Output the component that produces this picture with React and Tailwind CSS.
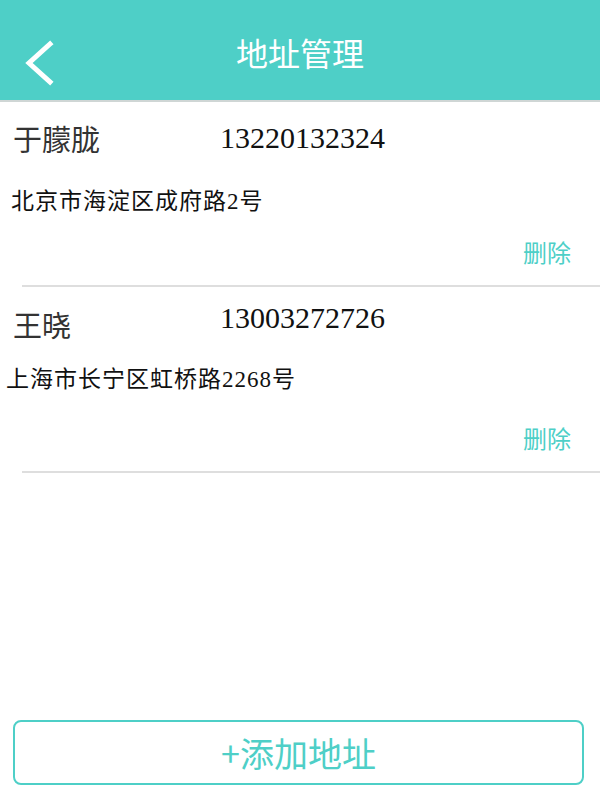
import React from "react";

const sans = { fontFamily: '"Noto Sans CJK SC", "Noto Sans", sans-serif' };

function Item({ name, phone, address, first }) {
  return (
    <div className={first ? "pt-[12px]" : "pt-[10px]"}>
      <div className="flex h-[48px] items-center">
        <div
          className={`w-[220px] pl-[13px] text-[29px] leading-none text-[#333] font-['Noto_Sans_CJK_SC',sans-serif] ${first ? "" : "pt-[6px]"}`}
        >
          {name}
        </div>
        <div
          className={`text-[30px] leading-none text-[#111] font-['Liberation_Serif','Noto_Sans_CJK_SC',serif] ${first ? "" : "pb-[6px]"}`}
        >
          {phone}
        </div>
      </div>
      <div
        className={`flex h-[34px] items-center text-[23px] tracking-[1px] leading-none text-[#111] font-['Liberation_Serif','Noto_Sans_CJK_SC',serif] ${first ? "mt-[22px] pl-[11px]" : "mt-[17px] pl-[6px]"}`}
      >
        {address}
      </div>
      <div
        className={`flex h-[30px] items-center justify-end pr-[29px] text-[24px] leading-none text-[#4ecfc7] font-['Noto_Sans_CJK_SC',sans-serif] ${first ? "mt-[19px]" : "mt-[27px]"}`}
      >
        删除
      </div>
      <div className="mt-[18px] ml-[22px] h-[2px] bg-[#dedede]" />
    </div>
  );
}

export default function App() {
  return (
    <div className="flex h-[800px] w-[600px] flex-col bg-white" style={sans}>
      <div className="relative flex h-[100px] items-center justify-center bg-[#4ecfc7]">
        <svg
          className="absolute left-[22px] top-[40px]"
          width="36"
          height="46"
          viewBox="0 0 36 46"
        >
          <polyline
            points="28,4 7,23 28,42"
            fill="none"
            stroke="white"
            strokeWidth="5"
            strokeLinecap="square"
          />
        </svg>
        <div className="pt-[4px] text-[32px] leading-none text-white font-['Noto_Sans_CJK_SC',sans-serif]">
          地址管理
        </div>
      </div>
      <div className="h-[2px] bg-[#cfd6d5]" />
      <Item first name="于朦胧" phone="13220132324" address="北京市海淀区成府路2号" />
      <Item name="王晓" phone="13003272726" address="上海市长宁区虹桥路2268号" />
      <div className="flex-1" />
      <div className="mb-[15px] ml-[13px] mr-[16px] flex h-[65px] items-center justify-center rounded-[8px] border-2 border-[#4ecfc7] text-[34px] leading-none text-[#4ecfc7] font-['Noto_Sans_CJK_SC',sans-serif]">
        +添加地址
      </div>
    </div>
  );
}
